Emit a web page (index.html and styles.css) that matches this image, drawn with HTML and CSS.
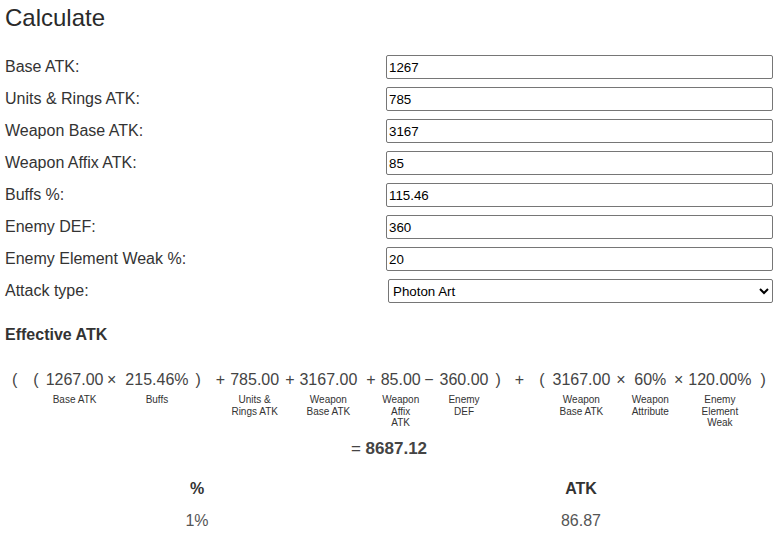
FILE: index.html
```html
<!DOCTYPE html>
<html>
<head>
<meta charset="utf-8">
<link rel="stylesheet" href="styles.css">
</head>
<body>
<div class="page">
  <h1 class="title">Calculate</h1>
  <form class="form">
    <div class="row"><label class="lbl">Base ATK:</label><input class="field" type="text" value="1267"></div>
    <div class="row"><label class="lbl">Units &amp; Rings ATK:</label><input class="field" type="text" value="785"></div>
    <div class="row"><label class="lbl">Weapon Base ATK:</label><input class="field" type="text" value="3167"></div>
    <div class="row"><label class="lbl">Weapon Affix ATK:</label><input class="field" type="text" value="85"></div>
    <div class="row"><label class="lbl">Buffs %:</label><input class="field" type="text" value="115.46"></div>
    <div class="row"><label class="lbl">Enemy DEF:</label><input class="field" type="text" value="360"></div>
    <div class="row"><label class="lbl">Enemy Element Weak %:</label><input class="field" type="text" value="20"></div>
    <div class="row"><label class="lbl">Attack type:</label><select class="pick"><option>Photon Art</option><option>Normal Attack</option><option>Technique</option></select></div>
  </form>

  <h2 class="sub">Effective ATK</h2>

  <div class="formula">
    <span class="op m7">(</span>
    <span class="op m16">(</span>
    <div class="term m7"><span class="num">1267.00</span><span class="cap">Base ATK</span></div>
    <span class="op m4">×</span>
    <div class="term m9"><span class="num">215.46%</span><span class="cap">Buffs</span></div>
    <span class="op m7">)</span>
    <span class="op m15">+</span>
    <div class="term m5"><span class="num">785.00</span><span class="cap">Units &amp; Rings ATK</span></div>
    <span class="op m6">+</span>
    <div class="term m5"><span class="num">3167.00</span><span class="cap">Weapon Base ATK</span></div>
    <span class="op m9">+</span>
    <div class="term m5"><span class="num">85.00</span><span class="cap">Weapon Affix ATK</span></div>
    <span class="op m4">−</span>
    <div class="term m6"><span class="num">360.00</span><span class="cap">Enemy DEF</span></div>
    <span class="op m7">)</span>
    <span class="op m14">+</span>
    <span class="op m15">(</span>
    <div class="term m8"><span class="num">3167.00</span><span class="cap">Weapon Base ATK</span></div>
    <span class="op m6">×</span>
    <div class="term m6"><span class="num">60%</span><span class="cap">Weapon Attribute</span></div>
    <span class="op m5">×</span>
    <div class="term m5"><span class="num">120.00%</span><span class="cap">Enemy Element Weak</span></div>
    <span class="op m9">)</span>
  </div>

  <div class="result">= <strong class="total">8687.12</strong></div>

  <table class="tbl">
    <thead>
      <tr><th>%</th><th>ATK</th></tr>
    </thead>
    <tbody>
      <tr><td>1%</td><td>86.87</td></tr>
    </tbody>
  </table>
</div>
</body>
</html>
```

FILE: styles.css
```css
html, body {
  margin: 0;
  padding: 0;
  background: #fff;
}

body {
  font-family: "Liberation Sans", Arial, Helvetica, sans-serif;
  color: #333;
  font-size: 16px;
}

.page {
  padding: 5px 10px 0 5px;
}

.title {
  margin: 0;
  font-size: 24px;
  line-height: 26px;
  font-weight: normal;
  color: #2a2a2a;
}

.form {
  margin: 24px 0 0 0;
}

.row {
  display: flex;
  align-items: center;
  height: 24px;
  margin-bottom: 8px;
}

.lbl {
  width: 381px;
  flex: none;
  font-size: 16px;
  line-height: 24px;
  color: #333;
}

.field {
  flex: 1;
  min-width: 0;
  box-sizing: border-box;
  height: 24px;
  margin: 0;
  padding: 0 2px;
  border: 1px solid #767676;
  border-radius: 2px;
  font-family: "Liberation Sans", Arial, sans-serif;
  font-size: 13.33px;
  color: #000;
  background: #fff;
}

.pick {
  flex: 1;
  min-width: 0;
  box-sizing: border-box;
  height: 24px;
  margin: 0 0 0 2px;
  padding: 0;
  border: 1px solid #767676;
  border-radius: 2px;
  font-family: "Liberation Sans", Arial, sans-serif;
  font-size: 13.33px;
  color: #000;
  background: #fff;
}

.sub {
  margin: 22px 0 0 0;
  font-size: 16px;
  line-height: 20px;
  font-weight: bold;
  color: #333;
}

.formula {
  display: flex;
  align-items: flex-start;
  margin-top: 25px;
  color: #444;
}

.op {
  font-size: 16px;
  line-height: 20px;
  flex: none;
}

.term {
  display: flex;
  flex-direction: column;
  align-items: center;
  width: min-content;
  flex: none;
}

.num {
  font-size: 16px;
  line-height: 20px;
  white-space: nowrap;
}

.cap {
  margin-top: 4px;
  font-size: 10px;
  line-height: 11.7px;
  text-align: center;
  color: #333;
}

.m3 { margin-left: 3px; }
.m4 { margin-left: 3.5px; }
.m5 { margin-left: 5px; }
.m6 { margin-left: 6px; }
.m7 { margin-left: 7px; }
.m8 { margin-left: 8px; }
.m9 { margin-left: 9px; }
.m10 { margin-left: 10px; }
.m14 { margin-left: 14px; }
.m15 { margin-left: 15px; }
.m16 { margin-left: 16px; }

.result {
  margin-top: 10px;
  text-align: center;
  font-size: 17px;
  line-height: 20px;
  color: #444;
}

.total {
  font-weight: bold;
}

.tbl {
  width: 100%;
  margin-top: 14px;
  border-collapse: collapse;
  table-layout: fixed;
}

.tbl th,
.tbl td {
  padding: 6px 0;
  line-height: 20px;
  font-size: 16px;
  text-align: center;
}

.tbl th {
  font-weight: bold;
  color: #333;
}

.tbl td {
  color: #555;
}
```
